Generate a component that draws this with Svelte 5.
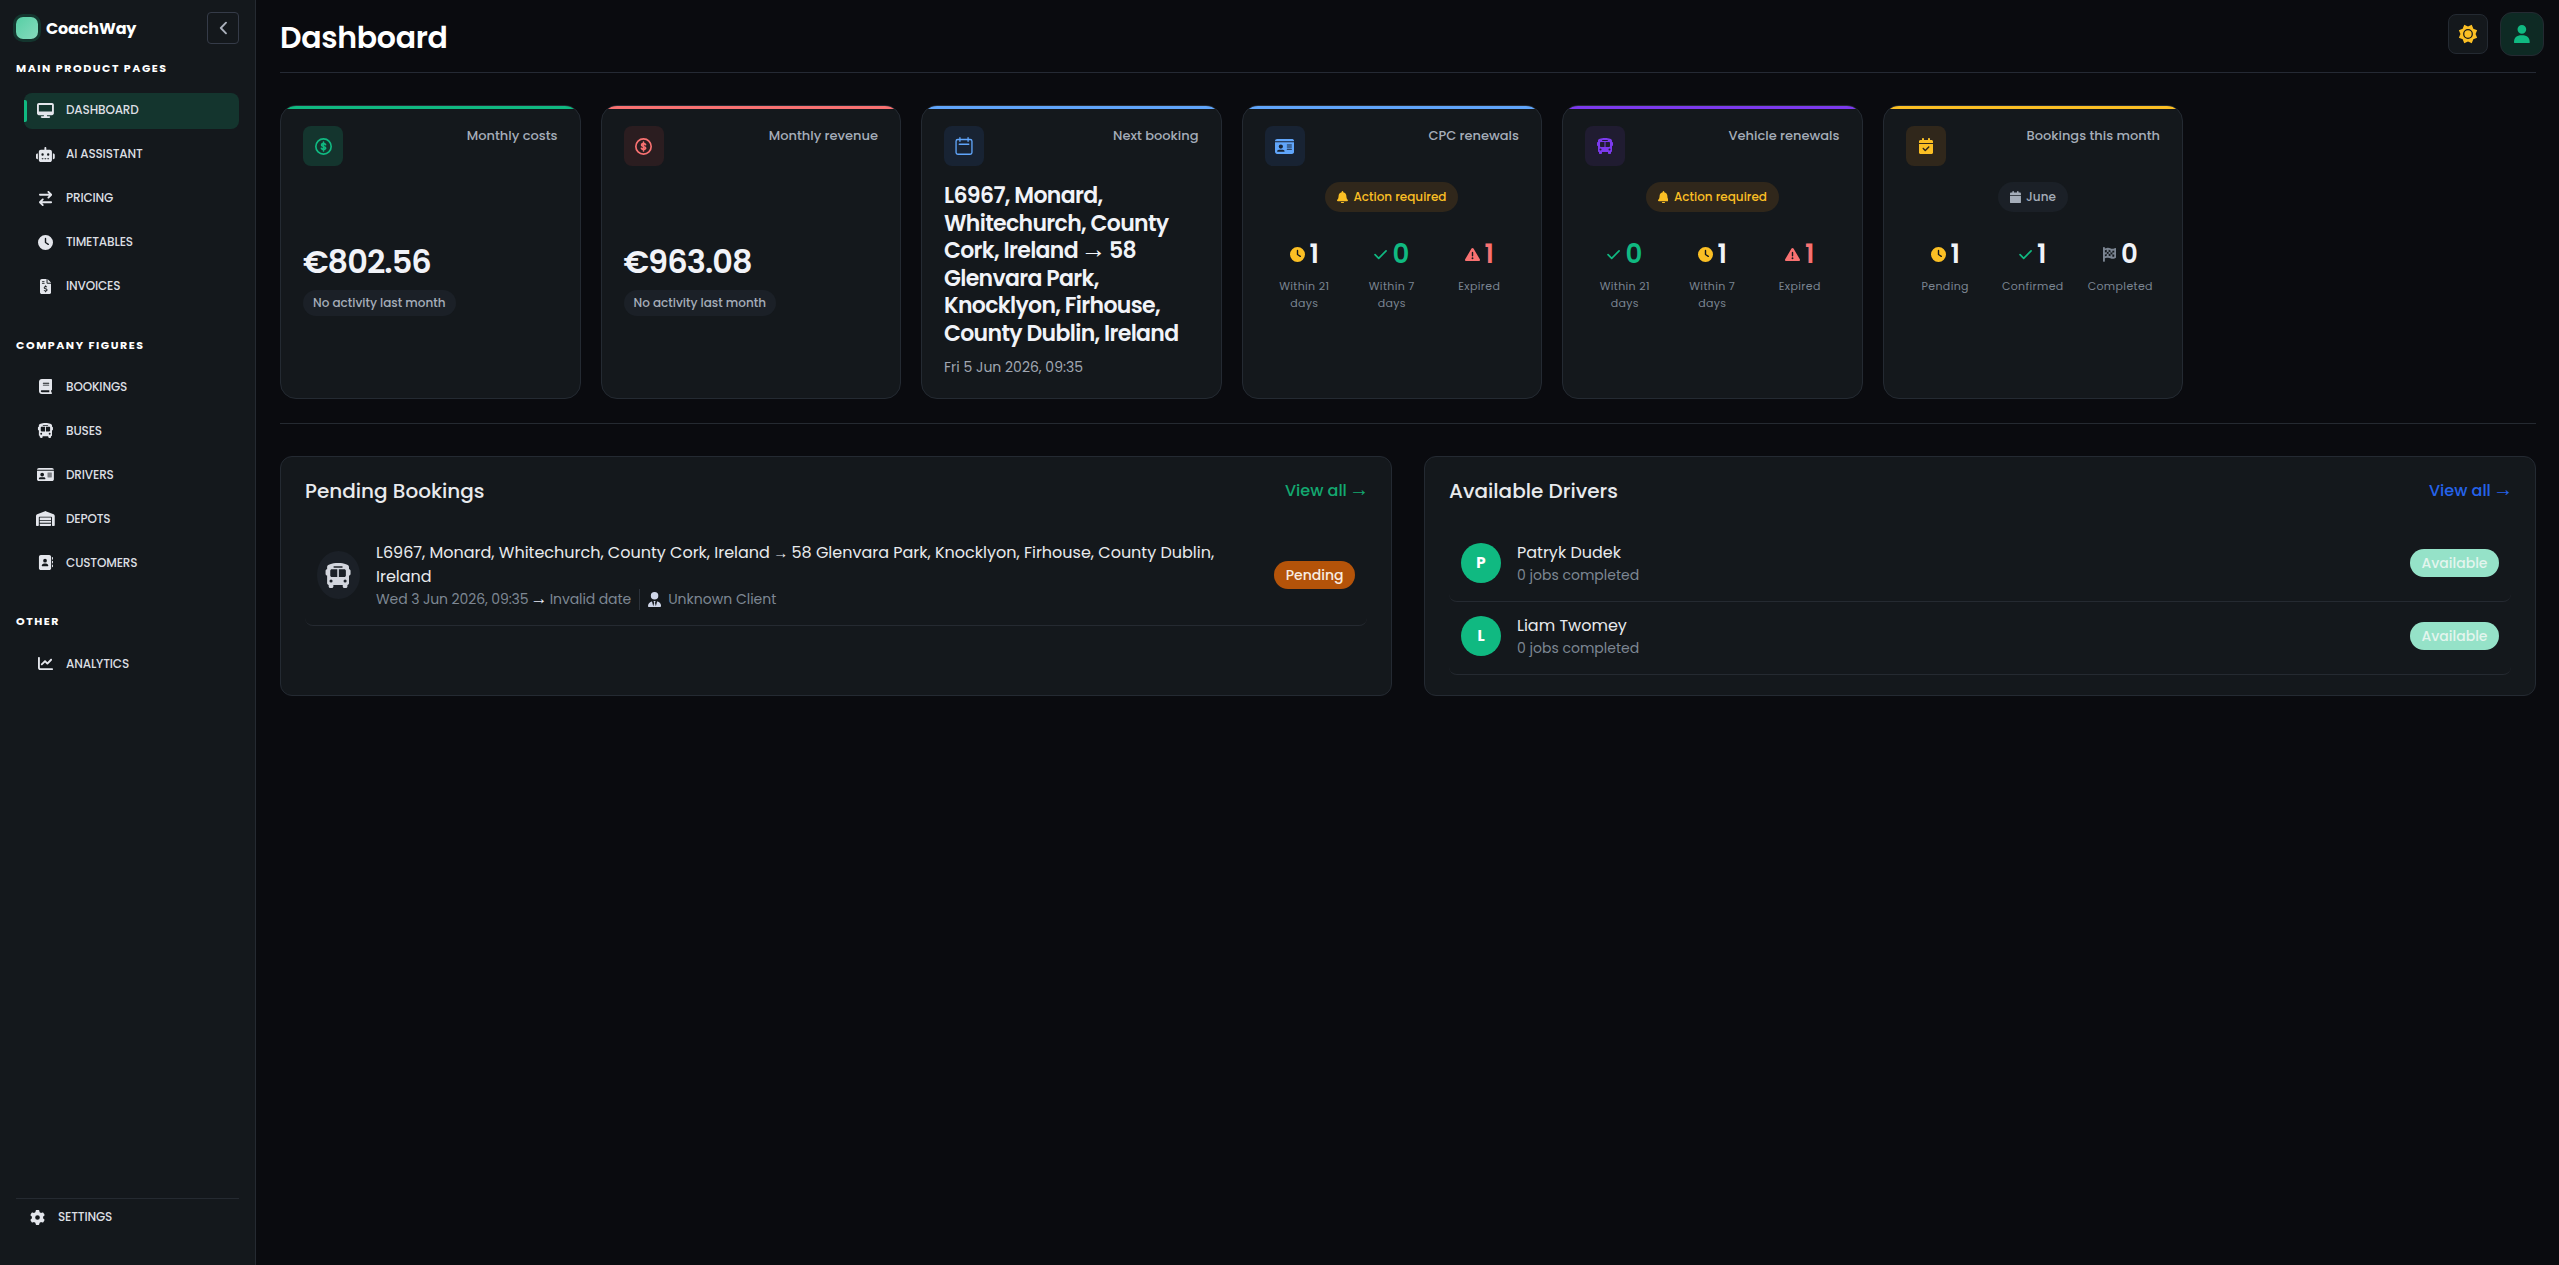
<script>
    const icons = {
        desktop: { w: 576, d: "M64 0C28.7 0 0 28.7 0 64V352c0 35.3 28.7 64 64 64H240l-10.7 32H160c-17.7 0-32 14.3-32 32s14.3 32 32 32H416c17.7 0 32-14.3 32-32s-14.3-32-32-32H346.7L336 416H512c35.3 0 64-28.7 64-64V64c0-35.3-28.7-64-64-64H64zM512 64V288H64V64H512z" },
        robot: { w: 640, d: "M320 0c17.7 0 32 14.3 32 32V96H472c39.8 0 72 32.2 72 72V440c0 39.8-32.2 72-72 72H168c-39.8 0-72-32.2-72-72V168c0-39.8 32.2-72 72-72H288V32c0-17.7 14.3-32 32-32zM208 384c-8.8 0-16 7.2-16 16s7.2 16 16 16h32c8.8 0 16-7.2 16-16s-7.2-16-16-16H208zm96 0c-8.8 0-16 7.2-16 16s7.2 16 16 16h32c8.8 0 16-7.2 16-16s-7.2-16-16-16H304zm96 0c-8.8 0-16 7.2-16 16s7.2 16 16 16h32c8.8 0 16-7.2 16-16s-7.2-16-16-16H400zM264 256a40 40 0 1 0 -80 0 40 40 0 1 0 80 0zm152 40a40 40 0 1 0 0-80 40 40 0 1 0 0 80zM48 224H64V416H48c-26.5 0-48-21.5-48-48V272c0-26.5 21.5-48 48-48zm544 0c26.5 0 48 21.5 48 48v96c0 26.5-21.5 48-48 48H576V224h16z" },
        exchange: { w: 448, d: "M438.6 150.6c12.5-12.5 12.5-32.8 0-45.3l-96-96c-12.5-12.5-32.8-12.5-45.3 0s-12.5 32.8 0 45.3L338.7 96 32 96C14.3 96 0 110.3 0 128s14.3 32 32 32l306.7 0-41.4 41.4c-12.5 12.5-12.5 32.8 0 45.3s32.8 12.5 45.3 0l96-96zm-333.3 352c12.5 12.5 32.8 12.5 45.3 0s12.5-32.8 0-45.3L109.3 416 416 416c17.7 0 32-14.3 32-32s-14.3-32-32-32l-306.7 0 41.4-41.4c12.5-12.5 12.5-32.8 0-45.3s-32.8-12.5-45.3 0l-96 96c-12.5 12.5-12.5 32.8 0 45.3l96 96z" },
        clock: { w: 512, d: "M256 0a256 256 0 1 1 0 512A256 256 0 1 1 256 0zM232 120V256c0 8 4 15.5 10.7 20l96 64c11 7.4 25.9 4.4 33.3-6.7s4.4-25.9-6.7-33.3L280 243.2V120c0-13.3-10.7-24-24-24s-24 10.7-24 24z" },
        invoice: { w: 384, d: "M64 0C28.7 0 0 28.7 0 64V448c0 35.3 28.7 64 64 64H320c35.3 0 64-28.7 64-64V160H256c-17.7 0-32-14.3-32-32V0H64zM256 0V128H384L256 0zM64 80c0-8.8 7.2-16 16-16h64c8.8 0 16 7.2 16 16s-7.2 16-16 16H80c-8.8 0-16-7.2-16-16zm0 64c0-8.8 7.2-16 16-16h64c8.8 0 16 7.2 16 16s-7.2 16-16 16H80c-8.8 0-16-7.2-16-16zm128 72c8.8 0 16 7.2 16 16v17.3c8.5 1.2 16.7 3.1 24.1 5.1c8.5 2.3 13.6 11 11.3 19.6s-11 13.6-19.6 11.3c-11.1-3-22-5.2-32.1-5.3c-8.4-.1-17.4 1.8-23.6 5.5c-5.7 3.4-8.1 7.3-8.1 12.8c0 3.7 1.3 6.5 7.3 10.1c6.9 4.1 16.6 7.1 29.2 10.9l.5 .1c11.3 3.4 25.3 7.6 36.3 14.6c12.1 7.6 22.4 19.7 22.7 38.2c.3 19.3-9.6 33.3-22.9 41.6c-7.7 4.8-16.4 7.6-25.1 9.1V440c0 8.8-7.2 16-16 16s-16-7.2-16-16V422.2c-11.2-2.1-21.7-5.7-30.9-8.9c-2.1-.7-4.2-1.4-6.2-2.1c-8.4-2.8-12.9-11.9-10.1-20.2s11.9-12.9 20.2-10.1c2.5 .8 4.8 1.6 7.1 2.4c13.6 4.6 24.6 8.4 36.3 8.7c9.1 .3 17.9-1.7 23.7-5.3c5.1-3.2 7.9-7.3 7.8-14c-.1-4.6-1.8-7.8-7.7-11.6c-6.8-4.3-16.5-7.4-29-11.2l-1.6-.5c-11-3.3-24.3-7.3-34.8-13.7c-12-7.2-22.6-18.9-22.7-37.3c-.1-19.4 10.8-32.8 23.8-40.5c7.5-4.4 15.8-7.2 24.1-8.7V232c0-8.8 7.2-16 16-16z" },
        book: { w: 448, d: "M96 0C43 0 0 43 0 96V416c0 53 43 96 96 96H384h32c17.7 0 32-14.3 32-32s-14.3-32-32-32V384c17.7 0 32-14.3 32-32V32c0-17.7-14.3-32-32-32H384 96zm0 384H352v64H96c-17.7 0-32-14.3-32-32s14.3-32 32-32zm32-240c0-8.8 7.2-16 16-16H336c8.8 0 16 7.2 16 16s-7.2 16-16 16H144c-8.8 0-16-7.2-16-16zm16 48H336c8.8 0 16 7.2 16 16s-7.2 16-16 16H144c-8.8 0-16-7.2-16-16s7.2-16 16-16z" },
        bus: { w: 576, d: "M288 0C422.4 0 512 35.2 512 80V96l0 32c17.7 0 32 14.3 32 32v64c0 17.7-14.3 32-32 32l0 160c0 17.7-14.3 32-32 32v32c0 17.7-14.3 32-32 32H416c-17.7 0-32-14.3-32-32V448H192v32c0 17.7-14.3 32-32 32H128c-17.7 0-32-14.3-32-32l0-32c-17.7 0-32-14.3-32-32l0-160c-17.7 0-32-14.3-32-32V160c0-17.7 14.3-32 32-32h0V96h0V80C64 35.2 153.6 0 288 0zM128 160v96c0 17.7 14.3 32 32 32H272V128H160c-17.7 0-32 14.3-32 32zM304 288H416c17.7 0 32-14.3 32-32V160c0-17.7-14.3-32-32-32H304V288zM144 400a32 32 0 1 0 0-64 32 32 0 1 0 0 64zm288 0a32 32 0 1 0 0-64 32 32 0 1 0 0 64zM384 80c0-8.8-7.2-16-16-16H208c-8.8 0-16 7.2-16 16s7.2 16 16 16H368c8.8 0 16-7.2 16-16z" },
        idCard: { w: 576, d: "M0 96l576 0c0-35.3-28.7-64-64-64H64C28.7 32 0 60.7 0 96zm0 32V416c0 35.3 28.7 64 64 64H512c35.3 0 64-28.7 64-64V128H0zM64 405.3c0-29.5 23.9-53.3 53.3-53.3H234.7c29.5 0 53.3 23.9 53.3 53.3c0 5.9-4.8 10.7-10.7 10.7H74.7c-5.9 0-10.7-4.8-10.7-10.7zM176 192a64 64 0 1 1 0 128 64 64 0 1 1 0-128zm176 16c0-8.8 7.2-16 16-16H496c8.8 0 16 7.2 16 16s-7.2 16-16 16H368c-8.8 0-16-7.2-16-16zm0 64c0-8.8 7.2-16 16-16H496c8.8 0 16 7.2 16 16s-7.2 16-16 16H368c-8.8 0-16-7.2-16-16zm0 64c0-8.8 7.2-16 16-16H496c8.8 0 16 7.2 16 16s-7.2 16-16 16H368c-8.8 0-16-7.2-16-16z" },
        warehouse: { w: 640, d: "M0 488V171.3c0-26.2 15.9-49.7 40.2-59.4L308.1 4.8c7.6-3.1 16.1-3.1 23.8 0L599.8 111.9c24.3 9.7 40.2 33.3 40.2 59.4V488c0 13.3-10.7 24-24 24H568c-13.3 0-24-10.7-24-24V224c0-17.7-14.3-32-32-32H128c-17.7 0-32 14.3-32 32V488c0 13.3-10.7 24-24 24H24c-13.3 0-24-10.7-24-24zm488 24l-336 0c-13.3 0-24-10.7-24-24V432H512l0 56c0 13.3-10.7 24-24 24zM128 400V336H512v64H128zm0-96V224H512l0 80H128z" },
        contacts: { w: 512, d: "M96 0C60.7 0 32 28.7 32 64V448c0 35.3 28.7 64 64 64H384c35.3 0 64-28.7 64-64V64c0-35.3-28.7-64-64-64H96zM208 288h64c44.2 0 80 35.8 80 80c0 8.8-7.2 16-16 16H144c-8.8 0-16-7.2-16-16c0-44.2 35.8-80 80-80zm-32-96a64 64 0 1 1 128 0 64 64 0 1 1 -128 0zM512 80c0-8.8-7.2-16-16-16s-16 7.2-16 16v64c0 8.8 7.2 16 16 16s16-7.2 16-16V80zM496 192c-8.8 0-16 7.2-16 16v64c0 8.8 7.2 16 16 16s16-7.2 16-16V208c0-8.8-7.2-16-16-16zm16 144c0-8.8-7.2-16-16-16s-16 7.2-16 16v64c0 8.8 7.2 16 16 16s16-7.2 16-16V336z" },
        chart: { w: 512, d: "M64 64c0-17.7-14.3-32-32-32S0 46.3 0 64V400c0 44.2 35.8 80 80 80H480c17.7 0 32-14.3 32-32s-14.3-32-32-32H80c-8.8 0-16-7.2-16-16V64zm406.6 86.6c12.5-12.5 12.5-32.8 0-45.3s-32.8-12.5-45.3 0L320 210.7l-57.4-57.4c-12.5-12.5-32.8-12.5-45.3 0l-112 112c-12.5 12.5-12.5 32.8 0 45.3s32.8 12.5 45.3 0L240 221.3l57.4 57.4c12.5 12.5 32.8 12.5 45.3 0l128-128z" },
        gear: { w: 512, d: "M495.9 166.6c3.2 8.7 .5 18.4-6.4 24.6l-43.3 39.4c1.1 8.3 1.7 16.8 1.7 25.4s-.6 17.1-1.7 25.4l43.3 39.4c6.9 6.2 9.6 15.9 6.4 24.6c-4.4 11.9-9.7 23.3-15.8 34.3l-4.7 8.1c-6.6 11-14 21.4-22.1 31.2c-5.9 7.2-15.7 9.6-24.5 6.8l-55.7-17.7c-13.4 10.3-28.2 18.9-44 25.4l-12.5 57.1c-2 9.1-9 16.3-18.2 17.8c-13.8 2.3-28 3.5-42.5 3.5s-28.7-1.2-42.5-3.5c-9.2-1.5-16.2-8.7-18.2-17.8l-12.5-57.1c-15.8-6.5-30.6-15.1-44-25.4L83.1 425.9c-8.8 2.8-18.6 .3-24.5-6.8c-8.1-9.8-15.5-20.2-22.1-31.2l-4.7-8.1c-6.1-11-11.4-22.4-15.8-34.3c-3.2-8.7-.5-18.4 6.4-24.6l43.3-39.4C64.6 273.1 64 264.6 64 256s.6-17.1 1.7-25.4L22.4 191.2c-6.9-6.2-9.6-15.9-6.4-24.6c4.4-11.9 9.7-23.3 15.8-34.3l4.7-8.1c6.6-11 14-21.4 22.1-31.2c5.9-7.2 15.7-9.6 24.5-6.8l55.7 17.7c13.4-10.3 28.2-18.9 44-25.4l12.5-57.1c2-9.1 9-16.3 18.2-17.8C227.3 1.2 241.5 0 256 0s28.7 1.2 42.5 3.5c9.2 1.5 16.2 8.7 18.2 17.8l12.5 57.1c15.8 6.5 30.6 15.1 44 25.4l55.7-17.7c8.8-2.8 18.6-.3 24.5 6.8c8.1 9.8 15.5 20.2 22.1 31.2l4.7 8.1c6.1 11 11.4 22.4 15.8 34.3zM256 336a80 80 0 1 0 0-160 80 80 0 1 0 0 160z" },
        calendarCheck: { w: 448, d: "M128 0c17.7 0 32 14.3 32 32V64H288V32c0-17.7 14.3-32 32-32s32 14.3 32 32V64h48c26.5 0 48 21.5 48 48v48H0V112C0 85.5 21.5 64 48 64H96V32c0-17.7 14.3-32 32-32zM0 192H448V464c0 26.5-21.5 48-48 48H48c-26.5 0-48-21.5-48-48V192zM329 305c9.4-9.4 9.4-24.6 0-33.9s-24.6-9.4-33.9 0l-95 95-47-47c-9.4-9.4-24.6-9.4-33.9 0s-9.4 24.6 0 33.9l64 64c9.4 9.4 24.6 9.4 33.9 0L329 305z" },
        calendar: { w: 448, d: "M96 32V64H48C21.5 64 0 85.5 0 112v48H448V112c0-26.5-21.5-48-48-48H352V32c0-17.7-14.3-32-32-32s-32 14.3-32 32V64H160V32c0-17.7-14.3-32-32-32S96 14.3 96 32zM448 192H0V464c0 26.5 21.5 48 48 48H400c26.5 0 48-21.5 48-48V192z" },
        bell: { w: 448, d: "M224 0c-17.7 0-32 14.3-32 32V51.2C119 66 64 130.6 64 208v18.8c0 47-17.3 92.4-48.5 127.6l-7.4 8.3c-8.4 9.4-10.4 22.9-5.3 34.4S19.4 416 32 416H416c12.6 0 24-7.4 29.2-18.9s3.1-25-5.3-34.4l-7.4-8.3C401.3 319.2 384 273.9 384 226.8V208c0-77.4-55-142-128-156.8V32c0-17.7-14.3-32-32-32zm45.3 493.3c12-12 18.7-28.3 18.7-45.3H224 160c0 17 6.7 33.3 18.7 45.3s28.3 18.7 45.3 18.7s33.3-6.7 45.3-18.7z" },
        warning: { w: 512, d: "M256 32c14.2 0 27.3 7.5 34.5 19.8l216 368c7.3 12.4 7.3 27.7 .2 40.1S486.3 480 472 480H40c-14.3 0-27.6-7.7-34.7-20.1s-7-27.8 .2-40.1l216-368C228.7 39.5 241.8 32 256 32zm0 128c-13.3 0-24 10.7-24 24V296c0 13.3 10.7 24 24 24s24-10.7 24-24V184c0-13.3-10.7-24-24-24zm32 224a32 32 0 1 0 -64 0 32 32 0 1 0 64 0z" },
        userTie: { w: 448, d: "M224 256A128 128 0 1 0 224 0a128 128 0 1 0 0 256zm-15 48c-15 0-24 17-16 29l19 31-33 124-38-150c-2-9-10-14-19-12C51 348 0 412 0 478c0 19 15 34 34 34H414c19 0 34-15 34-34 0-66-51-130-122-152-9-2-17 3-19 12L269 488l-33-124 19-31c8-12-1-29-16-29z" },
        flag: { w: 448, d: "M32 0C49.7 0 64 14.3 64 32V48l69-17.2c38.1-9.5 78.3-5.1 113.5 12.5c46.3 23.2 100.8 23.2 147.1 0l9.6-4.8C423.8 28.1 448 43.1 448 66.1V345.8c0 13.3-8.3 25.3-20.8 30l-34.7 13c-46.2 17.3-97.6 14.6-141.7-7.4c-37.9-19-81.3-23.7-122.5-13.4L64 384v96c0 17.7-14.3 32-32 32s-32-14.3-32-32V400 334 64 32C0 14.3 14.3 0 32 0zM64 187.1l64-13.9v65.5L64 252.6V318l48.8-12.2c5.1-1.3 10.1-2.4 15.2-3.3V238.7l38.9-8.4c8.3-1.8 16.7-2.5 25.1-2.1l0-64c13.6 .4 27.2 2.6 40.4 6.4l23.6 6.9v66.7l-41.7-12.3c-7.3-2.1-14.8-3.4-22.3-3.8v71.4c21.8 1.9 43.3 6.7 64 14.4V244.2l22.7 6.7c13.5 4 27.3 6.4 41.3 7.4V194c-7.8-.8-15.6-2.3-23.2-4.5l-40.8-12v-62c-13-3.8-25.8-8.8-38.2-15c-8.2-4.1-16.9-7-25.8-8.8v72.4c-13-.4-26 .8-38.7 3.6L128 173.2V98L64 114v73.1zM320 335.7c16.8 1.5 33.9-.7 50-6.8l14-5.2V251.9l-7.9 1.8c-18.4 4.3-37.3 5.7-56.1 4.5v77.4zm64-149.4V115.4c-20.9 6.1-42.4 9.1-64 9.1V194c13.9 1.4 28 .5 41.7-2.6l22.3-5.2z" },
        sun: { w: 512, d: "M160 22L256 62L352 22L392 120L490 160L450 256L490 352L392 392L352 490L256 450L160 490L120 392L22 352L62 256L22 160L120 120zM256 130a126 126 0 1 0 0 252a126 126 0 1 0 0-252zM256 162a94 94 0 1 1 0 188a94 94 0 1 1 0-188z" },
        person: { w: 448, d: "M224 248A124 124 0 1 0 224 0a124 124 0 1 0 0 248zM0 500C0 350 70 290 224 290S448 350 448 500Q448 512 436 512H12Q0 512 0 500z" },

        // outlined ones
        check: { w: 448, line: 58, d: "M36 262L160 386L412 134" },
        dollar: { w: 512, line: 50, d: "M256 25a231 231 0 1 0 0 462a231 231 0 1 0 0 -462zM318 200C308 155 196 155 196 208C196 262 320 246 320 304C320 358 204 358 192 310M256 126V388" },
        calendarLine: { w: 512, line: 38, d: "M80 70H432Q482 70 482 120V440Q482 490 432 490H80Q30 490 30 440V120Q30 70 80 70zM140 20V120M372 20V120M120 205H392" },
        chevron: { w: 320, line: 68, d: "M256 60L66 256L256 452" }
    };

    const menu = [
        { title: "Main product pages", items: [
            { icon: "desktop", label: "Dashboard", active: true },
            { icon: "robot", label: "AI Assistant" },
            { icon: "exchange", label: "Pricing" },
            { icon: "clock", label: "Timetables" },
            { icon: "invoice", label: "Invoices" }
        ]},
        { title: "Company figures", items: [
            { icon: "book", label: "Bookings" },
            { icon: "bus", label: "Buses" },
            { icon: "idCard", label: "Drivers" },
            { icon: "warehouse", label: "Depots" },
            { icon: "contacts", label: "Customers" }
        ]},
        { title: "Other", items: [
            { icon: "chart", label: "Analytics" }
        ]}
    ];

    const cards = [
        { tone: "green", icon: "dollar", size: 17, label: "Monthly costs", amount: "€802.56" },
        { tone: "red", icon: "dollar", size: 17, label: "Monthly revenue", amount: "€963.08" },
        { tone: "blue", icon: "calendarLine", size: 18, label: "Next booking", booking: true },
        { tone: "blue", icon: "idCard", size: 17, label: "CPC renewals", pill: "Action required", stats: [
            { icon: "clock", color: "amber", value: 1, label: "Within 21 days" },
            { icon: "check", color: "ok", value: 0, label: "Within 7 days", tinted: true },
            { icon: "warning", color: "bad", value: 1, label: "Expired", tinted: true }
        ]},
        { tone: "purple", icon: "bus", size: 16, label: "Vehicle renewals", pill: "Action required", stats: [
            { icon: "check", color: "ok", value: 0, label: "Within 21 days", tinted: true },
            { icon: "clock", color: "amber", value: 1, label: "Within 7 days" },
            { icon: "warning", color: "bad", value: 1, label: "Expired", tinted: true }
        ]},
        { tone: "yellow", icon: "calendarCheck", size: 16, label: "Bookings this month", pill: "June", stats: [
            { icon: "clock", color: "amber", value: 1, label: "Pending" },
            { icon: "check", color: "ok", value: 1, label: "Confirmed" },
            { icon: "flag", color: "muted", value: 0, label: "Completed" }
        ]}
    ];

    const drivers = [
        { name: "Patryk Dudek", jobs: 0 },
        { name: "Liam Twomey", jobs: 0 }
    ];
</script>

{#snippet icon(name, size)}
    {@const i = icons[name]}
    <svg class="icon" width={size * i.w / 512} height={size} viewBox="0 0 {i.w} 512">
        {#if i.line}
            <path d={i.d} fill="none" stroke="currentColor" stroke-width={i.line} stroke-linecap="round" stroke-linejoin="round"/>
        {:else}
            <path d={i.d} fill="currentColor" fill-rule="evenodd"/>
        {/if}
    </svg>
{/snippet}

<div class="app">
    <aside class="sidebar">
        <div class="brand">
            <span class="logo"></span>
            <span class="brand-name">CoachWay</span>
            <button class="collapse" type="button" aria-label="Collapse">{@render icon("chevron", 14)}</button>
        </div>

        {#each menu as group}
            <div class="group">
                <h6>{group.title}</h6>
                <nav>
                    {#each group.items as item}
                        <a href="#/" class="item" class:active={item.active}>
                            <span class="item-icon">{@render icon(item.icon, 15)}</span>
                            {item.label}
                        </a>
                    {/each}
                </nav>
            </div>
        {/each}

        <div class="sidebar-footer">
            <a href="#/" class="item">
                <span class="item-icon">{@render icon("gear", 15)}</span>
                Settings
            </a>
        </div>
    </aside>

    <main>
        <header>
            <h1>Dashboard</h1>
            <div class="actions">
                <button class="theme" type="button" aria-label="Theme">{@render icon("sun", 20)}</button>
                <button class="user" type="button" aria-label="Account">{@render icon("person", 18)}</button>
            </div>
        </header>

        <section class="cards">
            {#each cards as card}
                <article class="card {card.tone}">
                    <div class="card-head">
                        <span class="card-icon">{@render icon(card.icon, card.size)}</span>
                        <span class="card-label">{card.label}</span>
                    </div>
                    {#if card.amount}
                        <div class="card-money">
                            <div class="amount">{card.amount}</div>
                            <span class="chip">No activity last month</span>
                        </div>
                    {:else if card.booking}
                        <div class="route">L6967, Monard,<br>Whitechurch, County<br>Cork, Ireland <span class="arrow">→</span> 58<br>Glenvara Park,<br>Knocklyon, Firhouse,<br>County Dublin, Ireland</div>
                        <div class="route-date">Fri 5 Jun 2026, 09:35</div>
                    {:else}
                        <div class="pill" class:warn={card.pill !== "June"}>
                            {@render icon(card.pill === "June" ? "calendar" : "bell", 12.5)}
                            <span>{card.pill}</span>
                        </div>
                        <div class="stats">
                            {#each card.stats as stat}
                                <div class="stat">
                                    <div class="stat-value {stat.color}" class:tinted={stat.tinted}>
                                        {@render icon(stat.icon, 15)}
                                        <b>{stat.value}</b>
                                    </div>
                                    <div class="stat-label">{stat.label}</div>
                                </div>
                            {/each}
                        </div>
                    {/if}
                </article>
            {/each}
        </section>

        <section class="panels">
            <div class="panel">
                <div class="panel-head">
                    <h2>Pending Bookings</h2>
                    <a href="#/" class="view-all green-link">View all <span class="arrow">→</span></a>
                </div>
                <div class="row">
                    <span class="bus-icon">{@render icon("bus", 25)}</span>
                    <div class="row-text">
                        <div class="row-title">L6967, Monard, Whitechurch, County Cork, Ireland <span class="arrow small">→</span> 58 Glenvara Park, Knocklyon, Firhouse, County Dublin,<br>Ireland</div>
                        <div class="row-meta">
                            <span class="times">Wed 3 Jun 2026, 09:35 <span class="arrow light">→</span> Invalid date</span>
                            <span class="client">{@render icon("userTie", 15)} Unknown Client</span>
                        </div>
                    </div>
                    <span class="badge pending">Pending</span>
                </div>
            </div>

            <div class="panel">
                <div class="panel-head">
                    <h2>Available Drivers</h2>
                    <a href="#/" class="view-all blue-link">View all <span class="arrow">→</span></a>
                </div>
                {#each drivers as driver}
                    <div class="row">
                        <span class="avatar">{driver.name[0]}</span>
                        <div class="row-text">
                            <div class="row-title">{driver.name}</div>
                            <div class="row-meta">{driver.jobs} jobs completed</div>
                        </div>
                        <span class="badge available">Available</span>
                    </div>
                {/each}
            </div>
        </section>
    </main>
</div>

<style>
    :global(body) {
        background: #0a0b0f;
        color: #e8eaed;
        font-family: Poppins, Inter, "Open Sans", sans-serif;
    }
    .app {
        display: flex;
        height: 1265px;
        overflow: hidden;
    }
    .app, .app * { box-sizing: border-box; }
    a { text-decoration: none; }
    button { padding: 0; }
    .icon { display: block; flex-shrink: 0; }
    h1, h2, h6 { margin: 0; }

    /* Sidebar */
    .sidebar {
        display: flex;
        flex-direction: column;
        width: 256px;
        flex-shrink: 0;
        padding: 12px 16px 0;
        background: #14181c;
        border-right: 1px solid #252a31;
    }
    .brand {
        display: flex;
        align-items: center;
        height: 32px;
    }
    .logo {
        width: 22px;
        height: 22px;
        border-radius: 7px;
        background: linear-gradient(135deg, #57cfa5, #86dabd);
        box-shadow: 0 0 0 3px #14352e;
    }
    .brand-name {
        margin-left: 8px;
        color: #fff;
        font-size: 16px;
        font-weight: 700;
        letter-spacing: -.15px;
    }
    .collapse {
        display: flex;
        align-items: center;
        justify-content: center;
        width: 32px;
        height: 32px;
        margin-left: auto;
        color: #aab0bb;
        background: transparent;
        border: 1px solid #353b48;
        border-radius: 4px;
    }
    .group { margin-top: 15px; }
    .group + .group { margin-top: 30.7px; }
    .group h6 {
        height: 18px;
        color: #fff;
        font-size: 11px;
        line-height: 18px;
        font-weight: 700;
        letter-spacing: 1.55px;
        text-transform: uppercase;
        white-space: nowrap;
    }
    .group nav {
        display: flex;
        flex-direction: column;
        gap: 8px;
        padding: 16px 0 0 8px;
    }
    .item {
        position: relative;
        display: flex;
        align-items: center;
        height: 36px;
        padding: 0 0 1.5px 11.5px;
        border-radius: 8px;
        color: #dcdfe3;
        font-size: 12px;
        font-weight: 500;
        letter-spacing: -.15px;
        text-transform: uppercase;
    }
    .item-icon {
        display: flex;
        justify-content: center;
        width: 20px;
        margin-right: 10.5px;
        color: #e4e6ec;
    }
    .item.active { background: #14352e; }
    .item.active::before {
        content: "";
        position: absolute;
        left: 0;
        top: 7px;
        width: 3px;
        height: 22px;
        border-radius: 0 2px 2px 0;
        background: #10b981;
    }
    .sidebar-footer {
        margin-top: auto;
        height: 67px;
        padding-top: 1px;
        border-top: 1px solid #252a31;
    }

    /* Main */
    main {
        flex: 1;
        min-width: 0;
        padding: 0 23px 0 24px;
    }
    header {
        display: flex;
        justify-content: space-between;
        height: 73px;
        border-bottom: 1px solid #252a34;
    }
    h1 {
        color: #fff;
        font-size: 30px;
        line-height: 76px;
        font-weight: 600;
        letter-spacing: -.3px;
    }
    .actions {
        display: flex;
        align-items: center;
        gap: 12px;
        height: 68px;
        margin-right: -8px;
    }
    .actions button {
        display: flex;
        align-items: center;
        justify-content: center;
        border: 1px solid #242a32;
    }
    .theme {
        width: 40px;
        height: 40px;
        border-radius: 8px;
        background: #14181c;
        color: #fbbf24;
    }
    .user {
        width: 44px;
        height: 44px;
        border-radius: 12px;
        background: #0e2a24;
        color: #10b981;
    }

    /* Cards */
    .cards {
        display: grid;
        grid-template-columns: repeat(6, 300.5px);
        gap: 20px;
        padding: 32px 0 24px;
        border-bottom: 1px solid #252a31;
    }
    .card {
        position: relative;
        display: flex;
        flex-direction: column;
        height: 294px;
        padding: 20px 22px;
        border: 1px solid #242a32;
        border-radius: 16px;
        background: #14181c;
        overflow: hidden;
    }
    .card::before {
        content: "";
        position: absolute;
        left: 0;
        right: 0;
        top: 0;
        height: 3px;
        background: var(--tone);
    }
    .green { --tone: #10b981; --soft: #14352e; }
    .red { --tone: #f87171; --soft: #2b1d20; }
    .blue { --tone: #60a5fa; --soft: #182333; }
    .purple { --tone: #7c3aed; --soft: #201c31; }
    .yellow { --tone: #fbbf24; --soft: #30271b; }
    .card-head {
        display: flex;
        justify-content: space-between;
        height: 40px;
    }
    .card-icon {
        display: flex;
        align-items: center;
        justify-content: center;
        width: 40px;
        height: 40px;
        border-radius: 8px;
        color: var(--tone);
        background: var(--soft);
    }
    .card-label {
        color: #a5adb9;
        font-size: 13px;
        line-height: 20px;
        font-weight: 500;
    }
    .card-money { margin-top: 76px; }
    .amount {
        color: #f1f3f8;
        font-size: 32px;
        line-height: 40px;
        font-weight: 600;
        letter-spacing: -.03em;
    }
    .chip {
        display: inline-block;
        height: 26px;
        margin-top: 8px;
        padding: 0 10px;
        border-radius: 13px;
        background: #1b2027;
        color: #a5adb9;
        font-size: 12px;
        line-height: 26px;
        font-weight: 500;
        white-space: nowrap;
    }
    .route {
        margin-top: 16px;
        color: #f1f3f8;
        font-size: 22px;
        line-height: 27.5px;
        font-weight: 600;
        letter-spacing: -.03em;
        white-space: nowrap;
    }
    .route-date {
        margin-top: 10px;
        color: #a0a7b2;
        font-size: 14px;
        line-height: 21px;
    }
    /* the text face has no arrow of its own */
    .arrow {
        margin: 0 -.1em;
        font-family: "Liberation Sans", sans-serif;
        font-size: 1.25em;
        line-height: 0;
        font-weight: 400;
        letter-spacing: 0;
    }
    .route .arrow {
        margin: 0 -.07em;
        font-size: 1.16em;
    }
    .arrow.small {
        margin: 0 -1px;
        font-size: 15px;
    }
    .arrow.light {
        margin: 0 -1.5px;
        color: #e8eaf6;
        font-size: 17px;
    }
    .pill {
        display: flex;
        align-items: center;
        align-self: center;
        gap: 5.5px;
        height: 30px;
        margin-top: 16px;
        padding: 0 12px;
        border-radius: 15px;
        background: #1b2027;
        color: #a5adb9;
        font-size: 12px;
        font-weight: 500;
        white-space: nowrap;
    }
    .pill.warn {
        background: #30271b;
        color: #fbbf24;
    }
    .stats {
        display: grid;
        grid-template-columns: repeat(3, 1fr);
        gap: 8px;
        margin-top: 24px;
    }
    .stat {
        padding: 0 6px;
        text-align: center;
    }
    .stat-value {
        display: flex;
        align-items: center;
        justify-content: center;
        gap: 5px;
        height: 36px;
    }
    .stat-value b {
        color: #f1f3f8;
        font-size: 26px;
        font-weight: 600;
    }
    .stat-value.tinted b { color: inherit; }
    .amber { color: #fbbf24; }
    .ok { color: #10b981; }
    .bad { color: #f87171; }
    .muted { color: #7b8491; }
    .stat-label {
        margin-top: 6px;
        color: #7b8592;
        font-size: 11px;
        line-height: 17px;
        letter-spacing: .35px;
    }

    /* Panels */
    .panels {
        display: grid;
        grid-template-columns: 1fr 1fr;
        gap: 32px;
        margin-top: 32px;
    }
    .panel {
        height: 240px;
        padding: 24px;
        border: 1px solid #242a32;
        border-radius: 12px;
        background: #14181c;
    }
    .panel-head {
        display: flex;
        justify-content: space-between;
        height: 48px;
    }
    h2 {
        font-size: 20px;
        line-height: 20px;
        font-weight: 500;
    }
    .view-all {
        font-size: 16px;
        line-height: 19px;
        font-weight: 500;
        white-space: nowrap;
    }
    .green-link { color: #13a870; }
    .blue-link { color: #2563eb; }
    .row {
        display: flex;
        align-items: center;
        padding: 12px 12px 15px;
        border-bottom: 1px solid #252a31;
        border-radius: 8px;
    }
    .bus-icon {
        display: flex;
        align-items: center;
        justify-content: center;
        width: 43px;
        height: 48px;
        margin-bottom: 1px;
        border-radius: 50%;
        background: #1b2027;
        color: #d3d6de;
    }
    .avatar {
        width: 40px;
        height: 40px;
        margin-bottom: 1px;
        border-radius: 50%;
        background: #10b981;
        color: #fff;
        font-size: 15px;
        line-height: 40px;
        font-weight: 700;
        text-align: center;
    }
    .row-text {
        flex: 1;
        padding-left: 16px;
    }
    .row-title {
        font-size: 16px;
        line-height: 24px;
        white-space: nowrap;
    }
    .row-meta {
        display: flex;
        align-items: center;
        color: #7d8793;
        font-size: 14px;
        line-height: 21px;
    }
    .times { letter-spacing: -.1px; }
    .client {
        display: flex;
        align-items: center;
        gap: 7px;
        height: 21px;
        margin-left: 8px;
        padding-left: 8px;
        border-left: 1px solid #2b313a;
    }
    .client :global(.icon) { color: #cfd6e8; }
    .badge {
        height: 28px;
        margin-bottom: 1px;
        padding: 0 11.5px;
        border-radius: 14px;
        font-size: 14px;
        line-height: 28px;
        font-weight: 500;
    }
    .pending {
        background: #b45309;
        color: #f8ece2;
    }
    .available {
        background: #95e2c8;
        color: #e3f5ee;
    }
</style>
